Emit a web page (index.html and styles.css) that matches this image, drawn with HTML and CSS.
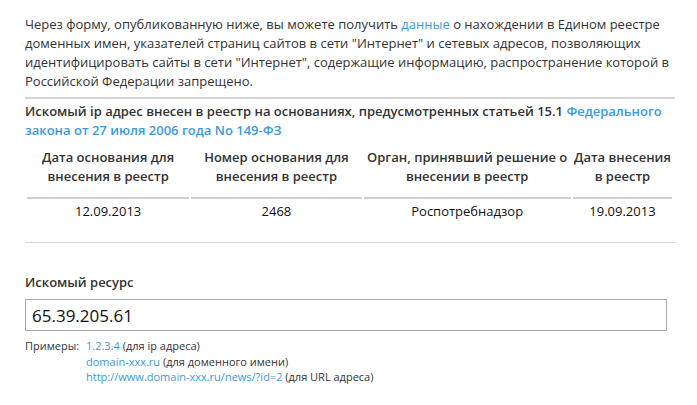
FILE: index.html
```html
<!DOCTYPE html>
<html lang="ru">
<head>
<meta charset="utf-8">
<link rel="stylesheet" href="styles.css">
</head>
<body>
<div class="page">
  <p class="intro">Через форму, опубликованную ниже, вы можете получить <a href="#">данные</a> о нахождении в Едином реестре доменных имен, указателей страниц сайтов в сети "Интернет" и сетевых адресов, позволяющих идентифицировать сайты в сети "Интернет", содержащие информацию, распространение которой в Российской Федерации запрещено.</p>
  <div class="result">
    <p class="result-title">Искомый ip адрес внесен в реестр на основаниях, предусмотренных статьей 15.1 <a href="#">Федерального закона от 27 июля 2006 года No 149-ФЗ</a></p>
    <table class="grid">
      <thead>
        <tr>
          <th class="c1">Дата основания для внесения в реестр</th>
          <th class="c2">Номер основания для внесения в реестр</th>
          <th class="c3">Орган, принявший решение о внесении в реестр</th>
          <th class="c4">Дата внесения в реестр</th>
        </tr>
      </thead>
      <tbody>
        <tr>
          <td>12.09.2013</td>
          <td>2468</td>
          <td>Роспотребнадзор</td>
          <td>19.09.2013</td>
        </tr>
      </tbody>
    </table>
  </div>
  <div class="search">
    <label class="search-label" for="res">Искомый ресурс</label>
    <input class="search-input" id="res" type="text" value="65.39.205.61">
    <div class="examples">
      <span class="ex-title">Примеры:</span>
      <div class="ex-list">
        <div><a href="#">1.2.3.4</a> (для ip адреса)</div>
        <div><a href="#">domain-xxx.ru</a> (для доменного имени)</div>
        <div><a href="#">http://www.domain-xxx.ru/news/?id=2</a> (для URL адреса)</div>
      </div>
    </div>
  </div>
</div>
</body>
</html>
```

FILE: styles.css
```css
html, body {
  margin: 0;
  padding: 0;
  background: #fff;
}
body {
  font-family: "Open Sans", "DejaVu Sans", sans-serif;
  color: #333;
  font-size: 13px;
}
a {
  color: #3d9ad8;
  text-decoration: none;
}
.page {
  width: 650px;
  margin-left: 25px;
  padding-top: 15px;
}
.intro {
  margin: 0;
  line-height: 19px;
  padding-bottom: 6px;
  border-bottom: 2px solid #d4d4d4;
}
.result {
  border-bottom: 1px solid #d4d4d4;
  padding-bottom: 21px;
}
.result-title {
  margin: 0;
  padding-top: 3px;
  font-weight: 600;
  line-height: 19px;
}
.grid {
  width: 649px;
  margin-top: 5px;
  border-collapse: separate;
  border-spacing: 2px 0;
  margin-left: 0;
}
.grid th {
  font-weight: 600;
  text-align: center;
  line-height: 19px;
  padding: 3px 0 11px;
  border-bottom: 2px solid #d0d0d0;
  vertical-align: top;
}
.grid td {
  text-align: center;
  color: #111;
  padding: 3px 0 0;
  line-height: 19px;
}
.c1 { width: 162px; }
.c2 { width: 170px; }
.c3 { width: 207px; }
.c4 { width: 99px; }
.search {
  padding-top: 30px;
  display: flex;
  flex-direction: column;
}
.search-label {
  font-weight: 600;
  line-height: 19px;
}
.search-input {
  margin-top: 7px;
  width: 642px;
  height: 32px;
  box-sizing: border-box;
  border: 1px solid #a8a8a8;
  padding: 0 6px;
  font-family: "Open Sans", "DejaVu Sans", sans-serif;
  font-size: 17px;
  color: #111;
  outline: none;
}
.examples {
  display: flex;
  margin-top: 7px;
  font-size: 11px;
  line-height: 15.5px;
}
.ex-title {
  width: 61px;
}
```
